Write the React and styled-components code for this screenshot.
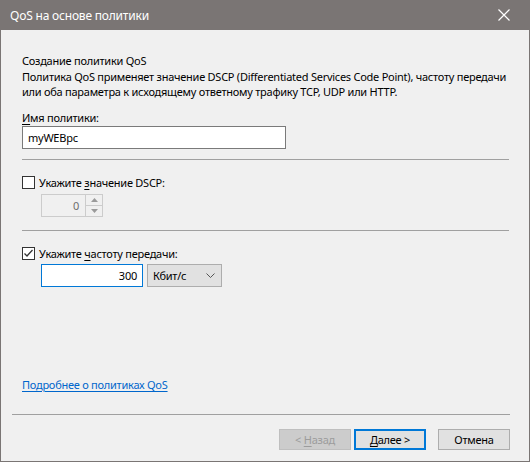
import React from "react";
import styled, { createGlobalStyle } from "styled-components";

const Global = createGlobalStyle`
  html, body { margin: 0; padding: 0; background: #7a7574; }
  body {
    font-family: "Noto Sans", "Open Sans", sans-serif;
    font-size: 11px;
    letter-spacing: -0.25px;
  }
`;

const Frame = styled.div`
  width: 530px;
  height: 462px;
  box-sizing: border-box;
  background: #7a7574;
  display: flex;
  flex-direction: column;
  padding: 0 1px 1px 1px;
`;

const TitleBar = styled.div`
  height: 30px;
  flex: none;
  display: flex;
  align-items: center;
  justify-content: space-between;
  padding: 0 19px 0 9px;
  color: #ffffff;
  font-size: 12px;
  letter-spacing: -0.2px;
`;

const CloseIcon = () => (
  <svg width="12" height="12" viewBox="0 0 12 12">
    <path d="M0.5 0.5 L11.5 11.5 M11.5 0.5 L0.5 11.5" stroke="#fff" strokeWidth="1.2" />
  </svg>
);

const Body = styled.div`
  flex: 1;
  background: #f0f0f0;
  display: flex;
  flex-direction: column;
  padding: 23px 0 0 0;
  color: #000;
`;

const Main = styled.div`
  flex: 1;
  display: flex;
  flex-direction: column;
  padding: 0 20px 0 21px;
`;

const Text = styled.div`
  line-height: 15px;
  white-space: nowrap;
  margin-top: ${(p) => p.$mt || 0}px;
`;

const U = styled.span`
  text-decoration: underline;
  text-underline-offset: 2px;
`;

const TextBox = styled.div`
  box-sizing: border-box;
  width: ${(p) => p.$w}px;
  height: 23px;
  margin-top: ${(p) => p.$mt || 0}px;
  background: #fff;
  border: 1px solid ${(p) => (p.$focus ? "#0078d7" : "#7a7a7a")};
  display: flex;
  align-items: center;
  justify-content: ${(p) => (p.$right ? "flex-end" : "flex-start")};
  padding: 0 5px;
`;

const Separator = styled.div`
  height: 1px;
  background: #a0a0a0;
  margin-top: ${(p) => p.$mt || 0}px;
`;

const CheckRow = styled.div`
  display: flex;
  align-items: center;
  gap: 4px;
  margin-top: ${(p) => p.$mt || 0}px;
  line-height: 15px;
`;

const Box = styled.div`
  box-sizing: border-box;
  width: 13px;
  height: 13px;
  border: 1px solid #333;
  background: #fff;
  display: flex;
  align-items: center;
  justify-content: center;
`;

const CheckBox = ({ checked }) => (
  <Box>
    {checked && (
      <svg width="11" height="11" viewBox="0 0 11 11">
        <path d="M1.5 5.5 L4 8 L9.5 2" fill="none" stroke="#333" strokeWidth="1.3" />
      </svg>
    )}
  </Box>
);

const Indented = styled.div`
  display: flex;
  gap: 4px;
  padding-left: 19px;
  margin-top: ${(p) => p.$mt || 0}px;
`;

const Spinner = styled.div`
  box-sizing: border-box;
  width: 62px;
  height: 23px;
  border: 1px solid #cccccc;
  background: #f0f0f0;
  display: flex;
`;

const SpinValue = styled.div`
  flex: 1;
  display: flex;
  align-items: center;
  justify-content: flex-end;
  padding-right: 6px;
  color: #6d6d6d;
`;

const SpinButtons = styled.div`
  width: 16px;
  display: flex;
  flex-direction: column;
  border-left: 1px solid #cccccc;
`;

const SpinBtn = styled.div`
  flex: 1;
  display: flex;
  align-items: center;
  justify-content: center;
  border-top: ${(p) => (p.$bottom ? "1px solid #cccccc" : "none")};
`;

const Arrow = ({ down }) => (
  <svg width="7" height="4" viewBox="0 0 7 4">
    <path d={down ? "M0 0 L7 0 L3.5 4 Z" : "M0 4 L7 4 L3.5 0 Z"} fill="#9a9a9a" />
  </svg>
);

const Select = styled.div`
  box-sizing: border-box;
  width: 75px;
  height: 23px;
  background: #e1e1e1;
  border: 1px solid #adadad;
  display: flex;
  align-items: center;
  justify-content: space-between;
  padding: 0 6px 0 5px;
`;

const Chevron = () => (
  <svg width="9" height="5" viewBox="0 0 9 5">
    <path d="M0.5 0.5 L4.5 4.5 L8.5 0.5" fill="none" stroke="#555" strokeWidth="1" />
  </svg>
);

const Spacer = styled.div`
  flex: 1;
`;

const Link = styled.a`
  color: #0066cc;
  text-decoration: underline;
  text-underline-offset: 2px;
  line-height: 15px;
  align-self: flex-start;
  cursor: pointer;
  margin-bottom: 22px;
`;

const Footer = styled.div`
  padding: 0 19px 0 11px;
`;

const ButtonRow = styled.div`
  display: flex;
  justify-content: flex-end;
  align-items: center;
  padding: 14px 0 11px;
`;

const Button = styled.div`
  box-sizing: border-box;
  width: 72px;
  height: 21px;
  display: flex;
  align-items: center;
  justify-content: center;
  margin-left: ${(p) => p.$ml || 0}px;
  background: ${(p) => (p.$disabled ? "#cccccc" : "#e1e1e1")};
  color: ${(p) => (p.$disabled ? "#9c9c9c" : "#000")};
  border: ${(p) =>
    p.$default ? "2px solid #0078d7" : p.$disabled ? "1px solid #bfbfbf" : "1px solid #adadad"};
`;

export default function App() {
  return (
    <>
      <Global />
      <Frame>
        <TitleBar>
          <span>QoS на основе политики</span>
          <CloseIcon />
        </TitleBar>
        <Body>
          <Main>
            <Text>Создание политики QoS</Text>
            <Text $mt={1}>
              Политика QoS применяет значение DSCP (Differentiated Services Code Point), частоту передачи
              <br />
              или оба параметра к исходящему ответному трафику TCP, UDP или HTTP.
            </Text>
            <Text $mt={11}>
              <U>И</U>мя политики:
            </Text>
            <TextBox $w={264} $mt={1}>myWEBpc</TextBox>
            <Separator $mt={10} />
            <CheckRow $mt={15}>
              <CheckBox />
              <span>
                Укажите <U>з</U>начение DSCP:
              </span>
            </CheckRow>
            <Indented $mt={4}>
              <Spinner>
                <SpinValue>0</SpinValue>
                <SpinButtons>
                  <SpinBtn>
                    <Arrow />
                  </SpinBtn>
                  <SpinBtn $bottom>
                    <Arrow down />
                  </SpinBtn>
                </SpinButtons>
              </Spinner>
            </Indented>
            <Separator $mt={13} />
            <CheckRow $mt={15}>
              <CheckBox checked />
              <span>
                Укажите <U>ч</U>астоту передачи:
              </span>
            </CheckRow>
            <Indented $mt={3}>
              <TextBox $w={102} $focus $right>300</TextBox>
              <Select>
                <span>Кбит/с</span>
                <Chevron />
              </Select>
            </Indented>
            <Spacer />
            <Link>Подробнее о политиках QoS</Link>
          </Main>
          <Footer>
            <Separator />
            <ButtonRow>
              <Button $disabled>
                &lt;&nbsp;<U>Н</U>азад
              </Button>
              <Button $default $ml={3}>
                <U>Д</U>алее &gt;
              </Button>
              <Button $ml={12}>Отмена</Button>
            </ButtonRow>
          </Footer>
        </Body>
      </Frame>
    </>
  );
}
